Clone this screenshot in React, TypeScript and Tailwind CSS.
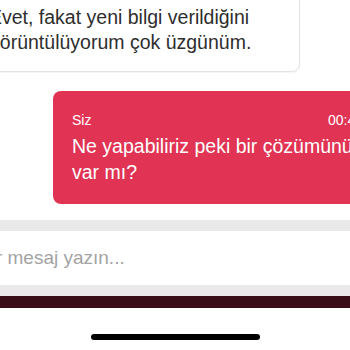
export default function App() {
  return (
    <div
      className="w-[350px] h-[350px] overflow-hidden bg-white flex flex-col"
      style={{ fontFamily: '"Liberation Sans", Arial, sans-serif' }}
    >
      <div className="flex-1 flex flex-col">
        <div className="-ml-[28px] -mt-[16px] w-[328px] shrink-0 rounded-lg border border-[#e3e3e3] bg-white px-[16px] pt-[20px] pb-[16px] text-[19.5px] leading-[25px] text-[#2e2e2e] shadow-[0_1px_1px_rgba(0,0,0,0.04)]">
          <p className="whitespace-nowrap">Evet, fakat yeni bilgi verildiğini</p>
          <p className="whitespace-nowrap">görüntülüyorum çok üzgünüm.</p>
        </div>
        <div className="ml-[53px] mt-[19px] w-[343px] shrink-0 rounded-lg bg-[#e13354] pl-[19px] pr-[19px] pt-[20px] pb-[19px] text-white">
          <div className="flex justify-between text-[14px] leading-[18px]">
            <span>Siz</span>
            <span className="mr-[14px]">00:45</span>
          </div>
          <p className="text-[19.5px] leading-[26px] mt-[4px]">
            Ne yapabiliriz peki bir çözümünüz var mı?
          </p>
        </div>
      </div>
      <div className="h-[11px] bg-[#e9e9e9]" />
      <div className="h-[54px] bg-white flex items-center">
        <span className="-ml-[21px] whitespace-nowrap text-[19px] text-[#a3a3a3]">
          Bir mesaj yazın...
        </span>
      </div>
      <div className="h-[11px] bg-[#ebe9ea]" />
      <div className="h-[12px] bg-[#3a0e17]" />
      <div className="h-[42px] bg-white flex justify-center items-start pt-[26px]">
        <div className="w-[169px] h-[6px] rounded-full bg-black" />
      </div>
    </div>
  );
}
